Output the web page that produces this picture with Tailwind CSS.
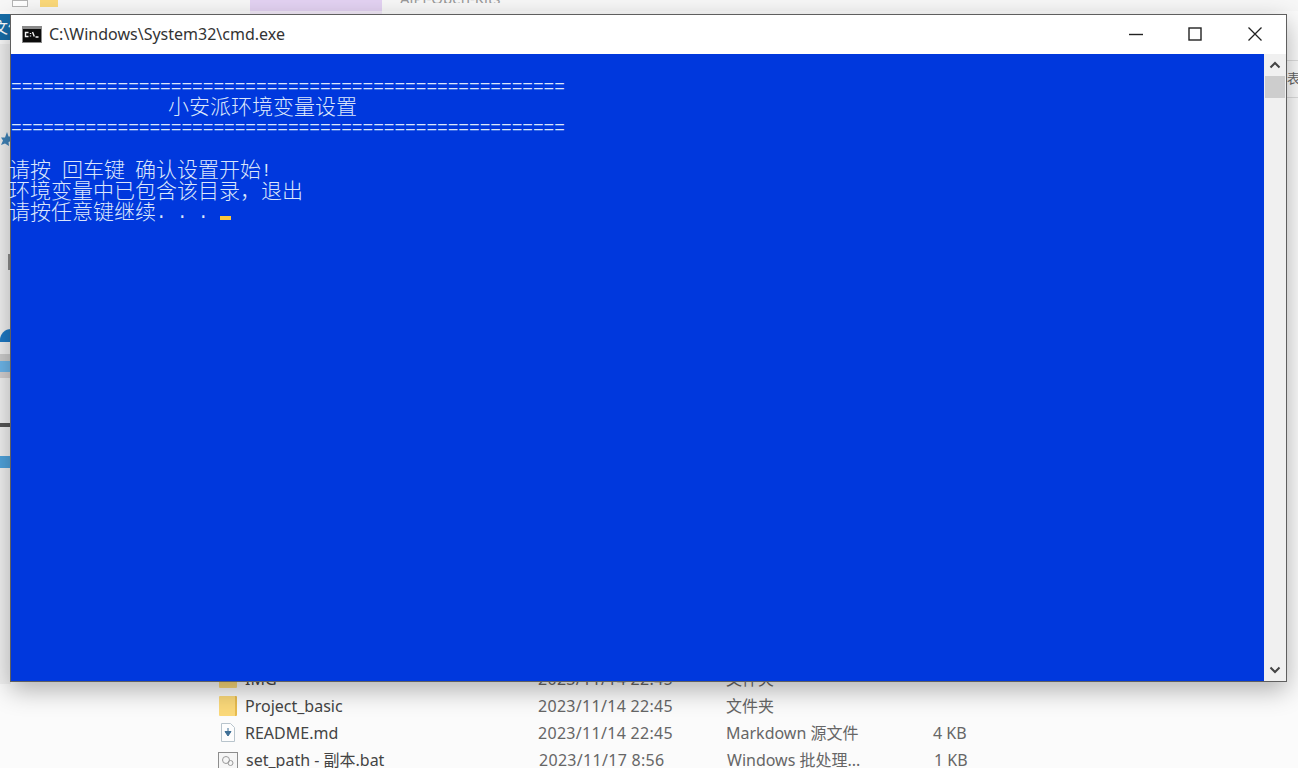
<!DOCTYPE html>
<html lang="zh-CN">
<head>
  <meta charset="UTF-8">
  <title>C:\Windows\System32\cmd.exe</title>
  <script src="https://cdn.jsdelivr.net/npm/@tailwindcss/browser@4"></script>
</head>
<body class="relative w-[1298px] h-[768px] overflow-hidden bg-white font-['Noto_Sans','Noto_Sans_CJK_SC',sans-serif]">

  <!-- Explorer behind the console -->
  <div class="absolute inset-0 bg-[#fbfbfb]">
    <div class="flex h-[11px] items-start bg-[#f7f7f7]">
      <div class="w-[12px]"></div>
      <div class="h-[7px] w-[16px] border border-[#b5b5b5] bg-white"></div>
      <div class="ml-[12px] h-[7px] w-[18px] bg-[#fbd97a]"></div>
      <div class="ml-[192px] h-[11px] w-[132px] bg-[#e3d2f2]"></div>
      <div class="ml-[18px] h-[3px] overflow-hidden">
        <div class="-mt-[12px] text-[15px] leading-[20px] text-[#999999]">AiPi-Open-Kits</div>
      </div>
    </div>
    <div class="ml-[250px] h-[3px] w-[132px] bg-[#f2e9f8]"></div>
    <div class="relative h-[26px] w-[40px] overflow-hidden bg-[#176da8]">
      <span class="absolute -left-[7px] top-[1px] text-[15px] leading-[24px] text-white">文件</span>
    </div>
    <div class="absolute left-0 top-[44px] h-[640px] w-[11px] bg-[#f0f0f0]">
      <svg class="absolute left-[1px] top-[88px]" width="10" height="14" viewBox="0 0 10 14"><path d="M6 0l1.500 4.500H10V9L7.500 10 8 14 4 11.500 0 13l2-4.500L0 5.500h4z" fill="#3f83b8"/></svg>
      <div class="absolute left-[8px] top-[210px] h-[16px] w-[3px] bg-[#8c8c8c]"></div>
      <div class="absolute left-0 top-[285px] h-[13px] w-[11px] rounded-tl-full bg-[#1d78c4]"></div>
      <div class="absolute left-0 top-[310px] h-[7px] w-[11px] bg-[#cccccc]"></div>
      <div class="absolute left-0 top-[317px] h-[11px] w-[11px] bg-[#6db6ea]"></div>
      <div class="absolute left-0 top-[328px] h-[6px] w-[11px] bg-[#d4d0d0]"></div>
      <div class="absolute left-0 top-[379px] h-[4px] w-[11px] bg-[#555555]"></div>
      <div class="absolute left-0 top-[412px] h-[12px] w-[11px] bg-[#4fa3dc]"></div>
    </div>
    <div class="absolute right-0 top-[60px] h-[38px] w-[11px] overflow-hidden border-y border-[#dddddd] pt-[4px] text-[13px] leading-[26px] text-[#666666]">表</div>

    <!-- File list rows -->
    <div class="absolute left-[219px] top-[665px] flex w-[760px] flex-col text-[16px] text-[#444444]">
      <div class="flex h-[27px] items-center">
        <div class="h-[18px] w-[18px] rounded-[1px] bg-[#fbd97a]"></div>
        <span class="ml-[8px] w-[293px]">IMG</span>
        <span class="w-[188px] tracking-[0.3px] text-[#666666]">2023/11/14 22:45</span>
        <span class="text-[#666666]">文件夹</span>
      </div>
      <div class="flex h-[27px] items-center">
        <div class="h-[20px] w-[18px] rounded-[1px] border-r-2 border-[#e8bc4e] bg-[#fbd97a]"></div>
        <span class="ml-[8px] w-[293px]">Project_basic</span>
        <span class="w-[188px] tracking-[0.3px] text-[#666666]">2023/11/14 22:45</span>
        <span class="text-[#666666]">文件夹</span>
      </div>
      <div class="flex h-[27px] items-center">
        <svg class="ml-[1px] mr-[1px]" width="16" height="19" viewBox="0 0 16 19">
          <path d="M1.500 .5h9l4 4v14h-13z" fill="#fdfdfd" stroke="#b8c4cc"/>
          <path d="M8 5v4M5 8.500h6L8 13z" fill="#3f6f96" stroke="#3f6f96"/>
        </svg>
        <span class="ml-[8px] w-[293px]">README.md</span>
        <span class="w-[188px] tracking-[0.3px] text-[#666666]">2023/11/14 22:45</span>
        <span class="w-[207px] text-[#666666]">Markdown 源文件</span>
        <span class="text-[#666666]">4 KB</span>
      </div>
      <div class="flex h-[27px] items-center pt-[1px]">
        <svg class="-ml-[1px] mr-[1px]" width="20" height="17" viewBox="0 0 20 17">
          <rect x=".5" y=".5" width="19" height="16" fill="#f6f6f6" stroke="#8d8d8d"/>
          <circle cx="8" cy="8" r="3.500" fill="none" stroke="#9a9a9a"/>
          <circle cx="12.500" cy="11" r="2.500" fill="none" stroke="#9a9a9a"/>
        </svg>
        <span class="ml-[7px] w-[293px]">set_path - 副本.bat</span>
        <span class="w-[188px] tracking-[0.3px] text-[#666666]">2023/11/17 8:56</span>
        <span class="w-[207px] text-[#666666]">Windows 批处理...</span>
        <span class="text-[#666666]">1 KB</span>
      </div>
    </div>
  </div>

  <!-- Console window -->
  <div class="absolute left-[10px] top-[14px] flex h-[668px] w-[1277px] flex-col border border-[#5f5f5f] bg-white shadow-[0_8px_24px_rgba(0,0,0,0.3)]">
    <div class="flex h-[39px] shrink-0 items-center bg-white pl-[11px]">
      <svg width="20" height="17" viewBox="0 0 20 17">
        <rect width="20" height="17" fill="#8a8a8a"/>
        <rect x="1" y="3" width="18" height="13" fill="#0c0c0c"/>
        <path d="M6.500 6.500h-3v4h3M8.500 7v.9M8.500 9.600v.9M10.500 6l1.800 4.500M13.500 11h3" fill="none" stroke="#f4f4f4" stroke-width="1.400"/>
      </svg>
      <span class="ml-[7px] pb-[2px] font-['Noto_Sans',sans-serif] text-[16px] text-[#333333]">C:\Windows\System32\cmd.exe</span>
      <div class="ml-auto flex h-full pb-[2px]">
        <div class="flex w-[59px] items-center justify-center">
          <svg width="14" height="14" viewBox="0 0 14 14"><path d="M0 7.500h14" stroke="#222222" stroke-width="1.400"/></svg>
        </div>
        <div class="flex w-[59px] items-center justify-center">
          <svg width="14" height="14" viewBox="0 0 14 14"><rect x="1" y="1" width="12" height="12" fill="none" stroke="#222222" stroke-width="1.400"/></svg>
        </div>
        <div class="flex w-[62px] items-center justify-center">
          <svg width="14" height="14" viewBox="0 0 14 14"><path d="M.5 .5l13 13M13.500 .5l-13 13" stroke="#222222" stroke-width="1.300"/></svg>
        </div>
      </div>
    </div>

    <div class="flex min-h-0 flex-1">
      <div class="flex-1 bg-[#0038dd] pt-[23px] font-['Liberation_Mono','Noto_Sans_CJK_SC',monospace] text-[21px] leading-[21px] text-[#dbe6fb]">
        <div class="h-[18px] whitespace-pre text-[17.75px]">====================================================</div>
        <div class="h-[23px] whitespace-pre pl-[157px] font-['Noto_Sans_CJK_SC',sans-serif] font-light">小安派环境变量设置</div>
        <div class="h-[21px] whitespace-pre text-[17.75px]">====================================================</div>
        <div class="h-[22px]"></div>
        <div class="-ml-[2px] flex h-[21px] font-light">
          <span class="w-[42px]">请按</span><span class="ml-[11px] w-[63px]">回车键</span><span class="ml-[10px]">确认设置开始</span><span class="text-[17.5px]">!</span>
        </div>
        <div class="-ml-[2px] h-[21px] whitespace-pre font-light">环境变量中已包含该目录，退出</div>
        <div class="-ml-[2px] flex h-[21px] items-start font-light">
          <span>请按任意键继续</span><span class="whitespace-pre text-[17.5px]">. . . </span>
          <span class="ml-[1px] mt-[13px] h-[4px] w-[11px] bg-[#fcc73a]"></span>
        </div>
      </div>

      <div class="flex w-[22px] shrink-0 flex-col items-center bg-[#f0f0f0]">
        <div class="flex h-[22px] w-full items-center justify-center">
          <svg width="12" height="8" viewBox="0 0 12 8"><path d="M1.500 6.500L6 2l4.500 4.500" fill="none" stroke="#444444" stroke-width="2"/></svg>
        </div>
        <div class="h-[22px] w-[20px] bg-[#cdcdcd]"></div>
        <div class="flex-1"></div>
        <div class="flex h-[22px] w-full items-center justify-center">
          <svg width="12" height="8" viewBox="0 0 12 8"><path d="M1.500 1.500L6 6l4.500-4.500" fill="none" stroke="#444444" stroke-width="2"/></svg>
        </div>
      </div>
    </div>
  </div>
</body>
</html>
